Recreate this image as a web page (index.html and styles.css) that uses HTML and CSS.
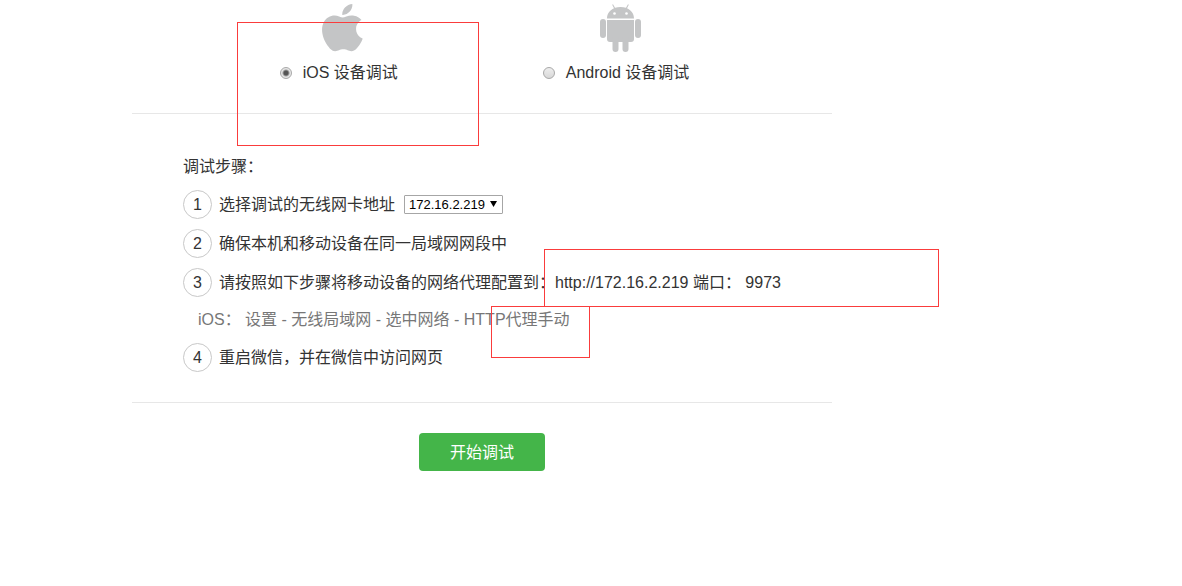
FILE: index.html
```html
<!DOCTYPE html>
<html lang="zh-CN">
<head>
    <meta charset="UTF-8">
    <meta name="viewport" content="width=device-width, initial-scale=1.0">
    <title>设备调试</title>
    <link rel="stylesheet" href="styles.css">
</head>
<body>
    <main class="panel">
        <form>
            <div class="devices">
                <div class="device">
                    <svg class="device-icon" viewBox="2.2 0 19.7 24.4" preserveAspectRatio="none" aria-hidden="true">
                        <path d="M12.152 6.896c-.948 0-2.415-1.078-3.96-1.04-2.04.027-3.91 1.183-4.961 3.014-2.117 3.675-.546 9.103 1.519 12.09 1.013 1.454 2.208 3.09 3.792 3.039 1.52-.065 2.09-.987 3.935-.987 1.831 0 2.35.987 3.96.948 1.637-.026 2.676-1.48 3.676-2.948 1.156-1.688 1.636-3.325 1.662-3.415-.039-.013-3.182-1.221-3.22-4.857-.026-3.04 2.48-4.494 2.597-4.559-1.429-2.09-3.623-2.324-4.39-2.376-2-.156-3.675 1.09-4.61 1.09zM15.53 3.83c.843-1.012 1.4-2.427 1.245-3.83-1.207.052-2.662.805-3.532 1.818-.78.896-1.454 2.338-1.273 3.714 1.338.104 2.715-.688 3.559-1.701"/>
                    </svg>
                    <label class="device-label">
                        <input type="radio" name="device" value="ios" checked>
                        iOS 设备调试
                    </label>
                </div>
                <div class="device">
                    <svg class="device-icon" viewBox="0 0 41 48" aria-hidden="true">
                        <path d="M7 14.5C7 9.5 10 6 14 4.2L12.2.8l.8-.5 2 3.5c3.4-1.2 7.6-1.2 11 0L28 .3l.8.5L27 4.2c4 1.8 7 5.300 7 10.300z"/>
                        <circle class="eye" cx="14.500" cy="9.500" r="1.300"/>
                        <circle class="eye" cx="26.500" cy="9.500" r="1.300"/>
                        <path d="M7 16h27v19a3 3 0 0 1-3 3H10a3 3 0 0 1-3-3z"/>
                        <rect x="0" y="15" width="6" height="19" rx="3"/>
                        <rect x="35" y="15" width="6" height="19" rx="3"/>
                        <rect x="12.500" y="32" width="6" height="16" rx="3"/>
                        <rect x="22.500" y="32" width="6" height="16" rx="3"/>
                    </svg>
                    <label class="device-label">
                        <input type="radio" name="device" value="android">
                        Android 设备调试
                    </label>
                </div>
            </div>

            <section class="steps">
                <p class="steps-title">调试步骤：</p>
                <div class="step">
                    <span class="number">1</span>
                    <label for="address">选择调试的无线网卡地址</label>
                    <span class="select-box">
                        <select id="address" name="address">
                            <option>172.16.2.219</option>
                        </select>
                    </span>
                </div>
                <div class="step">
                    <span class="number">2</span>
                    <span>确保本机和移动设备在同一局域网网段中</span>
                </div>
                <div class="step">
                    <span class="number">3</span>
                    <span>请按照如下步骤将移动设备的网络代理配置到：http://172.16.2.219 端口： 9973</span>
                </div>
                <p class="step-note">iOS： 设置 - 无线局域网 - 选中网络 - HTTP代理手动</p>
                <div class="step">
                    <span class="number">4</span>
                    <span>重启微信，并在微信中访问网页</span>
                </div>
            </section>

            <div class="actions">
                <button type="submit">开始调试</button>
            </div>
        </form>

        <!-- 标注框 -->
        <div class="mark mark-device"></div>
        <div class="mark mark-proxy"></div>
        <div class="mark mark-manual"></div>
    </main>
</body>
</html>
```

FILE: styles.css
```css
body {
    margin: 0;
    background-color: #fff;
    color: #333;
    font-family: "Liberation Sans", "Noto Sans CJK SC", sans-serif;
    font-size: 16px;
    line-height: 26px;
}
p {
    margin: 0;
}
.panel {
    position: relative;
    max-width: 700px;
    margin-left: 132px;
}
.devices {
    display: flex;
    justify-content: center;
    gap: 145px;
    padding: 4px 0 27px 5px;
    border-bottom: 1px solid #e7e7e7;
}
.device {
    display: flex;
    flex-direction: column;
    align-items: center;
    gap: 8px;
}
.device-icon {
    width: 41px;
    height: 48px;
    margin-left: 8px;
    fill: #c4c5c6;
}
.device-icon .eye {
    fill: #fff;
}
.device-label {
    display: flex;
    align-items: center;
    gap: 11px;
}
input[type="radio"] {
    appearance: none;
    width: 12px;
    height: 12px;
    margin: 0;
    border: 1px solid #a8a8a8;
    border-radius: 50%;
    background: linear-gradient(#eee, #d8d8d8);
}
input[type="radio"]:checked {
    background: radial-gradient(circle, #555 0, #555 2px, #e6e6e6 4px);
}
.steps {
    display: flex;
    flex-direction: column;
    gap: 10px;
    padding: 40px 0 30px 51px;
    border-bottom: 1px solid #e7e7e7;
}
.step {
    display: flex;
    align-items: center;
    gap: 7px;
}
.number {
    box-sizing: border-box;
    width: 29px;
    height: 29px;
    border: 1px solid #c8c8c8;
    border-radius: 50%;
    line-height: 27px;
    text-align: center;
}
.step-note {
    padding-left: 15px;
    color: #777;
}
.select-box {
    position: relative;
    display: flex;
    margin-left: 2px;
}
.select-box::after {
    content: "";
    position: absolute;
    top: 6px;
    right: 6px;
    width: 7px;
    height: 6px;
    background-color: #000;
    clip-path: polygon(0 0, 100% 0, 50% 100%);
    pointer-events: none;
}
select {
    appearance: none;
    height: 19px;
    padding: 0 17px 0 4px;
    border: 1px solid #a6a6a6;
    border-radius: 1px;
    background-color: #fff;
    color: #000;
    font-family: inherit;
    font-size: 13px;
}
.actions {
    padding: 30px 0;
    text-align: center;
}
button {
    height: 38px;
    padding: 0 31px 2px;
    border: none;
    border-radius: 4px;
    background-color: #44b549;
    color: #fff;
    font-family: inherit;
    font-size: 16px;
    cursor: pointer;
}
.mark {
    position: absolute;
    box-sizing: border-box;
    border: 1px solid #fa3c3c;
    pointer-events: none;
}
.mark-device {
    top: 22px;
    left: 105px;
    width: 242px;
    height: 124px;
}
.mark-proxy {
    top: 249px;
    left: 412px;
    width: 395px;
    height: 58px;
}
.mark-manual {
    top: 306px;
    left: 359px;
    width: 99px;
    height: 52px;
}
```
